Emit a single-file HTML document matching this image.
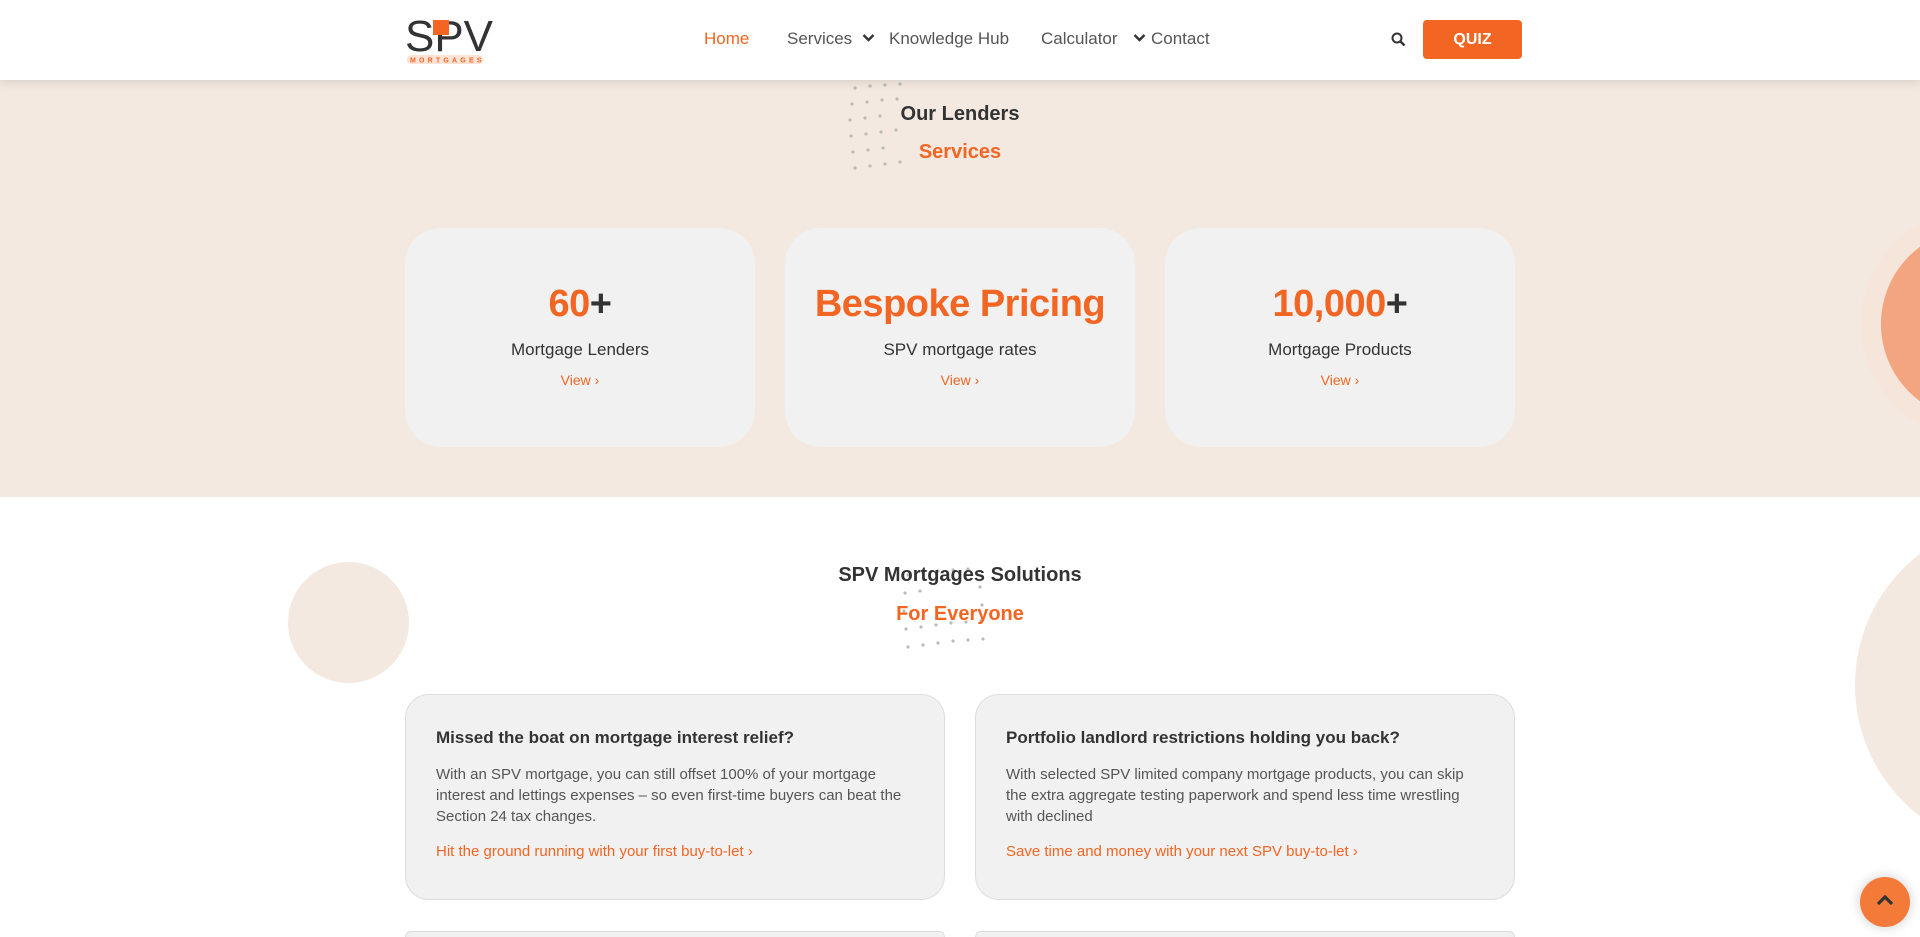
<!DOCTYPE html>
<html><head><meta charset="utf-8"><style>
*{margin:0;padding:0;box-sizing:border-box}
html,body{width:1920px;height:937px;overflow:hidden}
body{font-family:"Liberation Sans",sans-serif;background:#fff;color:#333}
#w{position:relative;width:1920px;height:937px;overflow:hidden}
.hdr{position:absolute;left:0;top:0;width:1920px;height:80px;background:#fff;box-shadow:0 2px 10px rgba(0,0,0,.12);z-index:5}
.nav{position:absolute;top:29px;font-size:17px;color:#555}
.beige{position:absolute;left:0;top:80px;width:1920px;height:417px;background:#f3e9e0;overflow:hidden}
.abs{position:absolute}
.card{position:absolute;top:228px;width:350px;height:219px;background:#f1f1f1;border-radius:36px;text-align:center}
.card .n{margin-top:55px;font-size:38px;font-weight:bold;color:#f26522;letter-spacing:-.5px}
.card .n b{color:#333}
.card .l{margin-top:14px;font-size:17px;color:#333}
.card .v{margin-top:12px;font-size:14px;color:#f26522}
.h1{position:absolute;left:0;width:1920px;text-align:center;font-size:20px;font-weight:bold}
.sc{position:absolute;top:694px;width:540px;height:206px;background:#f1f1f1;border:1px solid #ddd;border-radius:24px;padding:33px 30px}
.sc h3{font-size:17px;color:#333}
.sc p{font-size:15px;line-height:21px;color:#555;margin-top:16px}
.sc a{display:block;font-size:15px;color:#f26522;margin-top:16px}
.sc2{position:absolute;top:931px;width:540px;height:6px;background:#f1f1f1;border:1px solid #ddd;border-bottom:none;border-radius:24px 24px 0 0}
.dot{fill:#bbb}
</style></head><body><div id="w">
<div class="hdr">
 <svg class="abs" style="left:405px;top:15px" width="92" height="50" viewBox="0 0 92 50">
  <text x="0" y="36" font-family="Liberation Sans" font-size="44" fill="#333" textLength="88" lengthAdjust="spacingAndGlyphs">SPV</text>
  <rect x="28" y="5" width="16" height="15" fill="#f26522"/>
  <rect x="2" y="40" width="76" height="9" rx="4" fill="#fde3d6"/>
  <text x="5" y="47.5" font-family="Liberation Sans" font-size="7" fill="#f26522" font-weight="bold" letter-spacing="3.2">MORTGAGES</text>
 </svg>
 <div class="nav" style="left:704px;color:#f26522">Home</div>
 <div class="nav" style="left:787px">Services</div>
 <svg class="abs" style="left:862px;top:33px" width="13" height="10"><path d="M1.5 2l5 5 5-5" stroke="#333" stroke-width="2.4" fill="none"/></svg>
 <div class="nav" style="left:889px">Knowledge Hub</div>
 <div class="nav" style="left:1041px">Calculator</div>
 <svg class="abs" style="left:1133px;top:33px" width="13" height="10"><path d="M1.5 2l5 5 5-5" stroke="#333" stroke-width="2.4" fill="none"/></svg>
 <div class="nav" style="left:1151px">Contact</div>
 <svg class="abs" style="left:1391px;top:32px" width="15" height="15"><circle cx="6" cy="6" r="4.5" stroke="#333" stroke-width="2" fill="none"/><path d="M9.5 9.5l4 4" stroke="#333" stroke-width="2.4"/></svg>
 <div class="abs" style="left:1423px;top:20px;width:99px;height:39px;background:#f26522;border-radius:4px;color:#fff;font-weight:bold;font-size:16px;text-align:center;line-height:39px">QUIZ</div>
</div>
<div class="beige">
 <div class="abs" style="left:1881px;top:148px;width:192px;height:192px;border-radius:50%;background:#f2a57f;box-shadow:0 0 0 20px #f5e5da"></div>
</div>
<svg class="abs" style="left:835px;top:80px" width="110" height="95">
 <g class="dot">
 <circle cx="20" cy="8" r="1.6"/><circle cx="35" cy="6" r="1.6"/><circle cx="50" cy="5" r="1.6"/><circle cx="65" cy="4" r="1.6"/>
 <circle cx="17" cy="24" r="1.6"/><circle cx="32" cy="22" r="1.6"/><circle cx="47" cy="20" r="1.6"/><circle cx="62" cy="19" r="1.6"/>
 <circle cx="15" cy="40" r="1.6"/><circle cx="30" cy="38" r="1.6"/><circle cx="45" cy="36" r="1.6"/>
 <circle cx="16" cy="56" r="1.6"/><circle cx="31" cy="54" r="1.6"/><circle cx="46" cy="52" r="1.6"/><circle cx="61" cy="50" r="1.6"/>
 <circle cx="18" cy="72" r="1.6"/><circle cx="33" cy="70" r="1.6"/><circle cx="48" cy="68" r="1.6"/>
 <circle cx="20" cy="88" r="1.6"/><circle cx="35" cy="86" r="1.6"/><circle cx="50" cy="84" r="1.6"/><circle cx="65" cy="82" r="1.6"/>
 </g></svg>
<div class="h1" style="top:103px;color:#333">Our Lenders</div>
<div class="h1" style="top:141px;color:#f26522">Services</div>
<div class="card" style="left:405px"><div class="n">60<b>+</b></div><div class="l">Mortgage Lenders</div><div class="v">View ›</div></div>
<div class="card" style="left:785px"><div class="n">Bespoke Pricing</div><div class="l">SPV mortgage rates</div><div class="v">View ›</div></div>
<div class="card" style="left:1165px"><div class="n">10,000<b>+</b></div><div class="l">Mortgage Products</div><div class="v">View ›</div></div>

<div class="abs" style="left:288px;top:562px;width:121px;height:121px;border-radius:50%;background:#f3e9e0"></div>
<div class="abs" style="left:1855px;top:520px;width:330px;height:330px;border-radius:50%;background:#f3e9e0"></div>
<svg class="abs" style="left:890px;top:565px" width="115" height="100">
 <g class="dot">
 <circle cx="18" cy="10" r="1.6"/><circle cx="33" cy="8" r="1.6"/><circle cx="48" cy="6" r="1.6"/><circle cx="63" cy="5" r="1.6"/><circle cx="78" cy="4" r="1.6"/>
 <circle cx="15" cy="28" r="1.6"/><circle cx="30" cy="26" r="1.6"/><circle cx="90" cy="22" r="1.6"/>
 <circle cx="14" cy="46" r="1.6"/><circle cx="92" cy="40" r="1.6"/>
 <circle cx="16" cy="64" r="1.6"/><circle cx="31" cy="62" r="1.6"/><circle cx="46" cy="60" r="1.6"/><circle cx="61" cy="58" r="1.6"/><circle cx="76" cy="57" r="1.6"/><circle cx="91" cy="56" r="1.6"/>
 <circle cx="18" cy="82" r="1.6"/><circle cx="33" cy="80" r="1.6"/><circle cx="48" cy="78" r="1.6"/><circle cx="63" cy="76" r="1.6"/><circle cx="78" cy="75" r="1.6"/><circle cx="93" cy="74" r="1.6"/>
 </g></svg>
<div class="h1" style="top:564px;color:#333">SPV Mortgages Solutions</div>
<div class="h1" style="top:603px;color:#f26522">For Everyone</div>

<div class="sc" style="left:405px"><h3>Missed the boat on mortgage interest relief?</h3><p>With an SPV mortgage, you can still offset 100% of your mortgage interest and lettings expenses – so even first-time buyers can beat the Section 24 tax changes.</p><a>Hit the ground running with your first buy-to-let ›</a></div>
<div class="sc" style="left:975px"><h3>Portfolio landlord restrictions holding you back?</h3><p>With selected SPV limited company mortgage products, you can skip the extra aggregate testing paperwork and spend less time wrestling with declined</p><a>Save time and money with your next SPV buy-to-let ›</a></div>
<div class="sc2" style="left:405px"></div>
<div class="sc2" style="left:975px"></div>

<div class="abs" style="left:1860px;top:877px;width:50px;height:50px;border-radius:50%;background:#f47a3a;box-shadow:0 0 12px rgba(0,0,0,.2)"></div>
<svg class="abs" style="left:1876px;top:893px" width="18" height="14"><path d="M2 11l7-7 7 7" stroke="#333" stroke-width="3.2" fill="none"/></svg>
</div></body></html>
